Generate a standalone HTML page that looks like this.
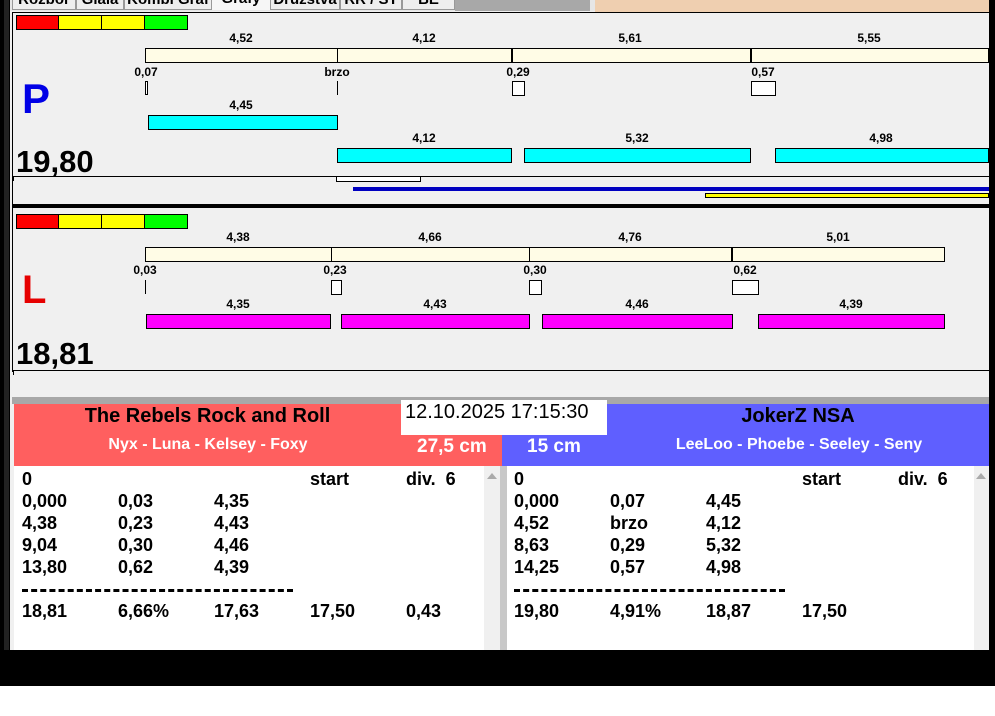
<!DOCTYPE html>
<html><head><meta charset="utf-8"><style>
*{margin:0;padding:0;box-sizing:border-box}
body{width:995px;height:716px;position:relative;background:#fff;font-family:"Liberation Sans",Arial,sans-serif;overflow:hidden}
.a{position:absolute}
.l{position:absolute;font-weight:bold;font-size:12px;color:#000;transform:translateX(-50%);white-space:nowrap;line-height:12px}
.bx{position:absolute;border:1px solid #000}
.t{position:absolute;font-weight:bold;font-size:18px;line-height:20px;color:#000;white-space:nowrap}
.tab{position:absolute;top:-4px;height:14px;border:1px solid #999;background:#eee;font:bold 15px 'Liberation Sans';line-height:6px;text-align:center;overflow:hidden;color:#000}
</style></head><body>
<div class="a" style="left:0;top:0;width:995px;height:686px;background:#000"></div>
<div class="a" style="left:10px;top:0;width:979px;height:650px;background:#f0f0f0"></div>
<div class="a" style="left:4px;top:0;width:5px;height:650px;background:#222"></div>
<div class="a" style="left:10px;top:0;width:979px;height:11px;background:#e6e6e6"></div>
<div class="a" style="left:455px;top:0;width:135px;height:11px;background:#a8a8a8"></div>
<div class="a" style="left:595px;top:0;width:394px;height:12px;background:#efcfb0"></div>
<div class="a" style="left:10px;top:0;width:445px;height:10px;overflow:hidden">
<div class="tab" style="left:2px;width:64px">Rozbor</div>
<div class="tab" style="left:66px;width:48px">Glala</div>
<div class="tab" style="left:114px;width:88px">Kombi Graf</div>
<div class="tab" style="left:202px;width:58px;background:#f6f6f6;border:none">Grafy</div>
<div class="tab" style="left:260px;width:70px">Družstva</div>
<div class="tab" style="left:330px;width:62px">RR / ST</div>
<div class="tab" style="left:392px;width:53px">BE</div>
</div>
<div class="a" style="left:12px;top:12px;width:977px;height:1px;background:#000"></div>
<div class="a" style="left:12px;top:12px;width:1px;height:360px;background:#000"></div>

<!-- P panel -->
<div class="bx" style="left:16px;top:15px;width:43px;height:15px;background:#f00"></div>
<div class="bx" style="left:58px;top:15px;width:44px;height:15px;background:#ff0"></div>
<div class="bx" style="left:101px;top:15px;width:44px;height:15px;background:#ff0"></div>
<div class="bx" style="left:144px;top:15px;width:44px;height:15px;background:#0f0"></div>
<div class="bx" style="left:145px;top:48px;width:844px;height:15px;background:#fffce6"></div>
<div class="a" style="left:337px;top:48px;width:1px;height:15px;background:#000"></div>
<div class="a" style="left:511px;top:48px;width:2px;height:15px;background:#000"></div>
<div class="a" style="left:750px;top:48px;width:2px;height:15px;background:#000"></div>
<div class="l" style="left:241px;top:32px">4,52</div>
<div class="l" style="left:424px;top:32px">4,12</div>
<div class="l" style="left:630px;top:32px">5,61</div>
<div class="l" style="left:869px;top:32px">5,55</div>
<div class="l" style="left:146px;top:66px">0,07</div>
<div class="l" style="left:337px;top:66px">brzo</div>
<div class="l" style="left:518px;top:66px">0,29</div>
<div class="l" style="left:763px;top:66px">0,57</div>
<div class="bx" style="left:145px;top:81px;width:3px;height:14px;background:#fff"></div>
<div class="a" style="left:337px;top:81px;width:1px;height:14px;background:#000"></div>
<div class="bx" style="left:512px;top:81px;width:13px;height:15px;background:#fff"></div>
<div class="bx" style="left:751px;top:81px;width:25px;height:15px;background:#fff"></div>
<div class="l" style="left:241px;top:99px">4,45</div>
<div class="bx" style="left:148px;top:115px;width:190px;height:15px;background:#0ff"></div>
<div class="l" style="left:424px;top:132px">4,12</div>
<div class="l" style="left:637px;top:132px">5,32</div>
<div class="l" style="left:881px;top:132px">4,98</div>
<div class="bx" style="left:337px;top:148px;width:175px;height:15px;background:#0ff"></div>
<div class="bx" style="left:524px;top:148px;width:227px;height:15px;background:#0ff"></div>
<div class="bx" style="left:775px;top:148px;width:214px;height:15px;background:#0ff"></div>
<div class="a" style="left:22px;top:76px;font:bold 42px 'Liberation Sans';color:#0000e6;line-height:46px">P</div>
<div class="a" style="left:16px;top:146px;font:bold 31px 'Liberation Sans';color:#000;line-height:32px">19,80</div>
<div class="a" style="left:12px;top:176px;width:977px;height:1px;background:#000"></div>
<div class="a" style="left:13px;top:176px;width:1px;height:5px;background:#000"></div>
<div class="bx" style="left:336px;top:176px;width:85px;height:6px;background:#fff"></div>
<div class="a" style="left:353px;top:187px;width:636px;height:4px;background:#0000c0"></div>
<div class="bx" style="left:705px;top:193px;width:284px;height:5px;background:#ff0"></div>
<div class="a" style="left:12px;top:204px;width:977px;height:4px;background:#000"></div>

<!-- L panel -->
<div class="bx" style="left:16px;top:214px;width:43px;height:15px;background:#f00"></div>
<div class="bx" style="left:58px;top:214px;width:44px;height:15px;background:#ff0"></div>
<div class="bx" style="left:101px;top:214px;width:44px;height:15px;background:#ff0"></div>
<div class="bx" style="left:144px;top:214px;width:44px;height:15px;background:#0f0"></div>
<div class="bx" style="left:145px;top:247px;width:800px;height:15px;background:#fffce6"></div>
<div class="a" style="left:331px;top:247px;width:1px;height:15px;background:#000"></div>
<div class="a" style="left:529px;top:247px;width:1px;height:15px;background:#000"></div>
<div class="a" style="left:731px;top:247px;width:2px;height:15px;background:#000"></div>
<div class="l" style="left:238px;top:231px">4,38</div>
<div class="l" style="left:430px;top:231px">4,66</div>
<div class="l" style="left:630px;top:231px">4,76</div>
<div class="l" style="left:838px;top:231px">5,01</div>
<div class="l" style="left:145px;top:264px">0,03</div>
<div class="l" style="left:335px;top:264px">0,23</div>
<div class="l" style="left:535px;top:264px">0,30</div>
<div class="l" style="left:745px;top:264px">0,62</div>
<div class="a" style="left:145px;top:280px;width:1px;height:14px;background:#000"></div>
<div class="bx" style="left:331px;top:280px;width:11px;height:15px;background:#fff"></div>
<div class="bx" style="left:529px;top:280px;width:13px;height:15px;background:#fff"></div>
<div class="bx" style="left:732px;top:280px;width:27px;height:15px;background:#fff"></div>
<div class="l" style="left:238px;top:298px">4,35</div>
<div class="l" style="left:435px;top:298px">4,43</div>
<div class="l" style="left:637px;top:298px">4,46</div>
<div class="l" style="left:851px;top:298px">4,39</div>
<div class="bx" style="left:146px;top:314px;width:185px;height:15px;background:#f0f"></div>
<div class="bx" style="left:341px;top:314px;width:189px;height:15px;background:#f0f"></div>
<div class="bx" style="left:542px;top:314px;width:191px;height:15px;background:#f0f"></div>
<div class="bx" style="left:758px;top:314px;width:187px;height:15px;background:#f0f"></div>
<div class="a" style="left:22px;top:268px;font:bold 40px 'Liberation Sans';color:#e60000;line-height:44px">L</div>
<div class="a" style="left:16px;top:338px;font:bold 31px 'Liberation Sans';color:#000;line-height:32px">18,81</div>
<div class="a" style="left:12px;top:370px;width:977px;height:1px;background:#000"></div>
<div class="a" style="left:13px;top:370px;width:1px;height:5px;background:#000"></div>

<!-- bottom headers -->
<div class="a" style="left:12px;top:397px;width:977px;height:7px;background:#a8a8a8"></div>
<div class="a" style="left:14px;top:404px;width:488px;height:62px;background:#ff5f5f"></div>
<div class="a" style="left:502px;top:404px;width:487px;height:62px;background:#5f5fff"></div>
<div class="a" style="left:401px;top:400px;width:206px;height:35px;background:#fff"></div>
<div class="a" style="left:405px;top:401px;font:20px 'Liberation Sans';color:#000;line-height:22px">12.10.2025 17:15:30</div>
<div class="a" style="left:14px;top:405px;width:387px;text-align:center;font:bold 20px 'Liberation Sans';line-height:22px">The Rebels Rock and Roll</div>
<div class="a" style="left:14px;top:436px;width:388px;text-align:center;font:bold 16px 'Liberation Sans';color:#fff;line-height:18px">Nyx - Luna - Kelsey - Foxy</div>
<div class="a" style="left:417px;top:437px;font:bold 19px 'Liberation Sans';color:#fff;line-height:20px">27,5 cm</div>
<div class="a" style="left:527px;top:437px;font:bold 19px 'Liberation Sans';color:#fff;line-height:20px">15 cm</div>
<div class="a" style="left:607px;top:405px;width:382px;text-align:center;font:bold 20px 'Liberation Sans';line-height:22px">JokerZ NSA</div>
<div class="a" style="left:640px;top:436px;width:318px;text-align:center;font:bold 16px 'Liberation Sans';color:#fff;line-height:18px">LeeLoo - Phoebe - Seeley - Seny</div>

<!-- tables -->
<div class="a" style="left:14px;top:466px;width:470px;height:184px;background:#fff"></div>
<div class="a" style="left:484px;top:466px;width:16px;height:184px;background:#f0f0f0"></div>
<div class="a" style="left:500px;top:466px;width:7px;height:184px;background:#c8c8c8"></div>
<div class="a" style="left:507px;top:466px;width:467px;height:184px;background:#fff"></div>
<div class="a" style="left:974px;top:466px;width:15px;height:184px;background:#f0f0f0"></div>
<div class="a" style="left:487px;top:473px;width:0;height:0;border-left:5px solid transparent;border-right:5px solid transparent;border-bottom:6px solid #aaa"></div>
<div class="a" style="left:976px;top:473px;width:0;height:0;border-left:5px solid transparent;border-right:5px solid transparent;border-bottom:6px solid #aaa"></div>

<div class="t" style="left:22px;top:469px">0</div><div class="t" style="left:310px;top:469px">start</div><div class="t" style="left:406px;top:469px">div.&nbsp; 6</div>
<div class="t" style="left:22px;top:491px">0,000</div><div class="t" style="left:118px;top:491px">0,03</div><div class="t" style="left:214px;top:491px">4,35</div>
<div class="t" style="left:22px;top:513px">4,38</div><div class="t" style="left:118px;top:513px">0,23</div><div class="t" style="left:214px;top:513px">4,43</div>
<div class="t" style="left:22px;top:535px">9,04</div><div class="t" style="left:118px;top:535px">0,30</div><div class="t" style="left:214px;top:535px">4,46</div>
<div class="t" style="left:22px;top:557px">13,80</div><div class="t" style="left:118px;top:557px">0,62</div><div class="t" style="left:214px;top:557px">4,39</div>
<div class="a" style="left:22px;top:589px;width:271px;border-top:3px dashed #000"></div>
<div class="t" style="left:22px;top:601px">18,81</div><div class="t" style="left:118px;top:601px">6,66%</div><div class="t" style="left:214px;top:601px">17,63</div><div class="t" style="left:310px;top:601px">17,50</div><div class="t" style="left:406px;top:601px">0,43</div>

<div class="t" style="left:514px;top:469px">0</div><div class="t" style="left:802px;top:469px">start</div><div class="t" style="left:898px;top:469px">div.&nbsp; 6</div>
<div class="t" style="left:514px;top:491px">0,000</div><div class="t" style="left:610px;top:491px">0,07</div><div class="t" style="left:706px;top:491px">4,45</div>
<div class="t" style="left:514px;top:513px">4,52</div><div class="t" style="left:610px;top:513px">brzo</div><div class="t" style="left:706px;top:513px">4,12</div>
<div class="t" style="left:514px;top:535px">8,63</div><div class="t" style="left:610px;top:535px">0,29</div><div class="t" style="left:706px;top:535px">5,32</div>
<div class="t" style="left:514px;top:557px">14,25</div><div class="t" style="left:610px;top:557px">0,57</div><div class="t" style="left:706px;top:557px">4,98</div>
<div class="a" style="left:514px;top:589px;width:271px;border-top:3px dashed #000"></div>
<div class="t" style="left:514px;top:601px">19,80</div><div class="t" style="left:610px;top:601px">4,91%</div><div class="t" style="left:706px;top:601px">18,87</div><div class="t" style="left:802px;top:601px">17,50</div>
</body></html>
